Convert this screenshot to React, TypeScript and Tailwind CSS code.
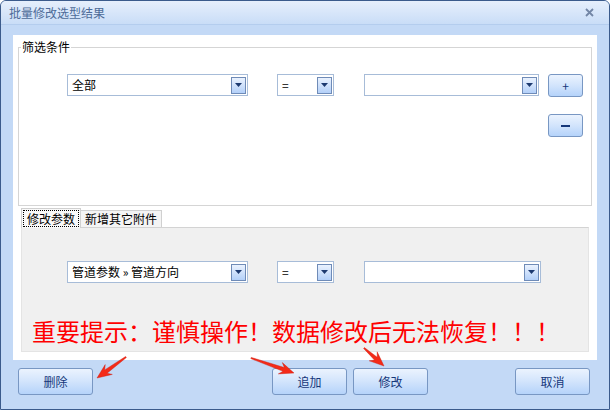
import React from "react";

const font = { fontFamily: '"Noto Sans CJK SC", "Noto Sans", sans-serif' };

// small dropdown arrow button inside the combo boxes
const DropBtn = () => (
  <div className="mr-[1px] flex h-[17px] w-[15px] shrink-0 items-center justify-center border border-[#6f8bb7] bg-linear-to-b from-[#eaf2fe] via-[#cfe1fb] to-[#b3d0f9]">
    <svg width="7" height="4" viewBox="0 0 7 4">
      <polygon points="0,0 7,0 3.5,4" fill="#1d3a70" />
    </svg>
  </div>
);

const Combo = ({ w, text }: { w: string; text?: string }) => (
  <div className={`flex h-[22px] shrink-0 items-center border border-[#a7bcd8] bg-white pl-[4px] ${w}`}>
    <span className="flex-1 truncate text-[12px] leading-[16px] text-black">{text}</span>
    <DropBtn />
  </div>
);

const Btn = ({ w, h, children, className = "" }: { w: string; h: string; children: React.ReactNode; className?: string }) => (
  <button
    className={`flex shrink-0 items-center justify-center rounded-[3px] border border-[#7897c3] bg-linear-to-b from-[#ebf3fe] via-[#d2e4fc] to-[#b5d3fa] text-[12px] leading-[16px] text-[#15377a] ${w} ${h} ${className}`}
  >
    {children}
  </button>
);

// tapered red arrow, tail -> tip
const arrowPoints = (x1: number, y1: number, x2: number, y2: number) => {
  const dx = x2 - x1;
  const dy = y2 - y1;
  const L = Math.hypot(dx, dy);
  const ux = dx / L;
  const uy = dy / L;
  const px = -uy;
  const py = ux;
  const hl = 13;
  const hw = 6;
  const bx = x2 - ux * hl;
  const by = y2 - uy * hl;
  const pts = [
    [x1 + px * 0.6, y1 + py * 0.6],
    [bx + ux * 2 + px * 2, by + uy * 2 + py * 2],
    [bx - ux * 1.5 + px * hw, by - uy * 1.5 + py * hw],
    [x2, y2],
    [bx - ux * 1.5 - px * hw, by - uy * 1.5 - py * hw],
    [bx + ux * 2 - px * 2, by + uy * 2 - py * 2],
    [x1 - px * 0.6, y1 - py * 0.6],
  ];
  return pts.map((p) => `${p[0].toFixed(1)},${p[1].toFixed(1)}`).join(" ");
};

export default function App() {
  return (
    <div style={font} className="relative flex h-[410px] w-[610px] flex-col overflow-hidden rounded-t-[6px] border border-[#3b5b8c] bg-[#c3d9f6]">
      {/* title bar */}
      <div className="flex h-[24px] shrink-0 items-center justify-between border-b border-[#b4cdee] bg-linear-to-b from-[#e6effc] to-[#c9ddf7] pl-[8px] pr-[15px]">
        <span className="text-[12px] leading-[16px] text-[#4d6b98]">批量修改选型结果</span>
        <svg width="9" height="9" viewBox="0 0 9 9">
          <path d="M1 1 L8 8 M8 1 L1 8" stroke="#7386a6" strokeWidth="1.8" />
        </svg>
      </div>

      <div className="flex flex-1 flex-col px-[12px] pt-[10px]">
        {/* white content panel */}
        <div className="flex h-[325px] flex-col bg-white px-[5px] pt-[4px]">
          <fieldset className="border border-[#d5d5d5] p-0">
            <legend className="ml-[2px] px-[1px] text-[12px] leading-[16px] text-black">筛选条件</legend>
            <div className="flex items-start pb-[68px] pl-[48px] pt-[19px]">
              <Combo w="w-[181px]" text="全部" />
              <Combo w="ml-[29px] w-[57px]" text="=" />
              <Combo w="ml-[30px] w-[175px]" />
              <div className="ml-[9px] flex flex-col gap-[17px]">
                <Btn w="w-[35px]" h="h-[23px]">
                  <span className="text-[12px] leading-none">+</span>
                </Btn>
                <Btn w="w-[35px]" h="h-[23px]">
                  <span className="block h-[2px] w-[9px] bg-[#15377a]" />
                </Btn>
              </div>
            </div>
          </fieldset>

          {/* tabs */}
          <div className="mx-[3px] mt-[2px] flex flex-col">
            <div className="flex h-[19px] items-end">
              <div className="relative z-[1] -mb-px h-[20px] w-[60px] border border-b-0 border-[#d0d0d0] bg-[#f9f9f9] p-[1px]">
                <div className="flex h-full items-center justify-center border border-dotted border-black text-[12px] leading-[16px] text-black">
                  修改参数
                </div>
              </div>
              <div className="flex h-[17px] w-[81px] items-center justify-center border border-b-0 border-l-0 border-[#d0d0d0] bg-[#f4f4f4] text-[12px] leading-[16px] text-black">
                新增其它附件
              </div>
            </div>
            <div className="h-[125px] border border-[#e4e4e4] border-t-[#d3d3d3] bg-[#f0f0f0]">
              <div className="flex items-start pl-[45px] pt-[33px]">
                <Combo w="w-[181px]" text="管道参数 » 管道方向" />
                <Combo w="ml-[29px] w-[57px]" text="=" />
                <Combo w="ml-[30px] w-[177px]" />
              </div>
              <div className="mt-[36px] pl-[10px] text-[24px] leading-[24px] whitespace-nowrap text-[#ff0000]">
                重要提示：谨慎操作！数据修改后无法恢复！！！
              </div>
            </div>
          </div>
        </div>

        {/* bottom buttons */}
        <div className="mt-[8px] flex pl-[5px]">
          <Btn w="w-[75px]" h="h-[27px]">删除</Btn>
          <Btn w="w-[75px]" h="h-[27px]" className="ml-[179px]">追加</Btn>
          <Btn w="w-[75px]" h="h-[27px]" className="ml-[6px]">修改</Btn>
          <Btn w="w-[75px]" h="h-[27px]" className="ml-[87px]">取消</Btn>
        </div>
      </div>

      {/* annotation arrows */}
      <svg className="pointer-events-none absolute left-0 top-0" width="610" height="410">
        <g fill="#f42a18" stroke="#c81a10" strokeWidth="0.4">
          <polygon points={arrowPoints(125, 356, 96, 377)} />
          <polygon points={arrowPoints(250, 357, 293, 372)} />
          <polygon points={arrowPoints(363, 347, 383, 365)} />
        </g>
      </svg>
    </div>
  );
}
